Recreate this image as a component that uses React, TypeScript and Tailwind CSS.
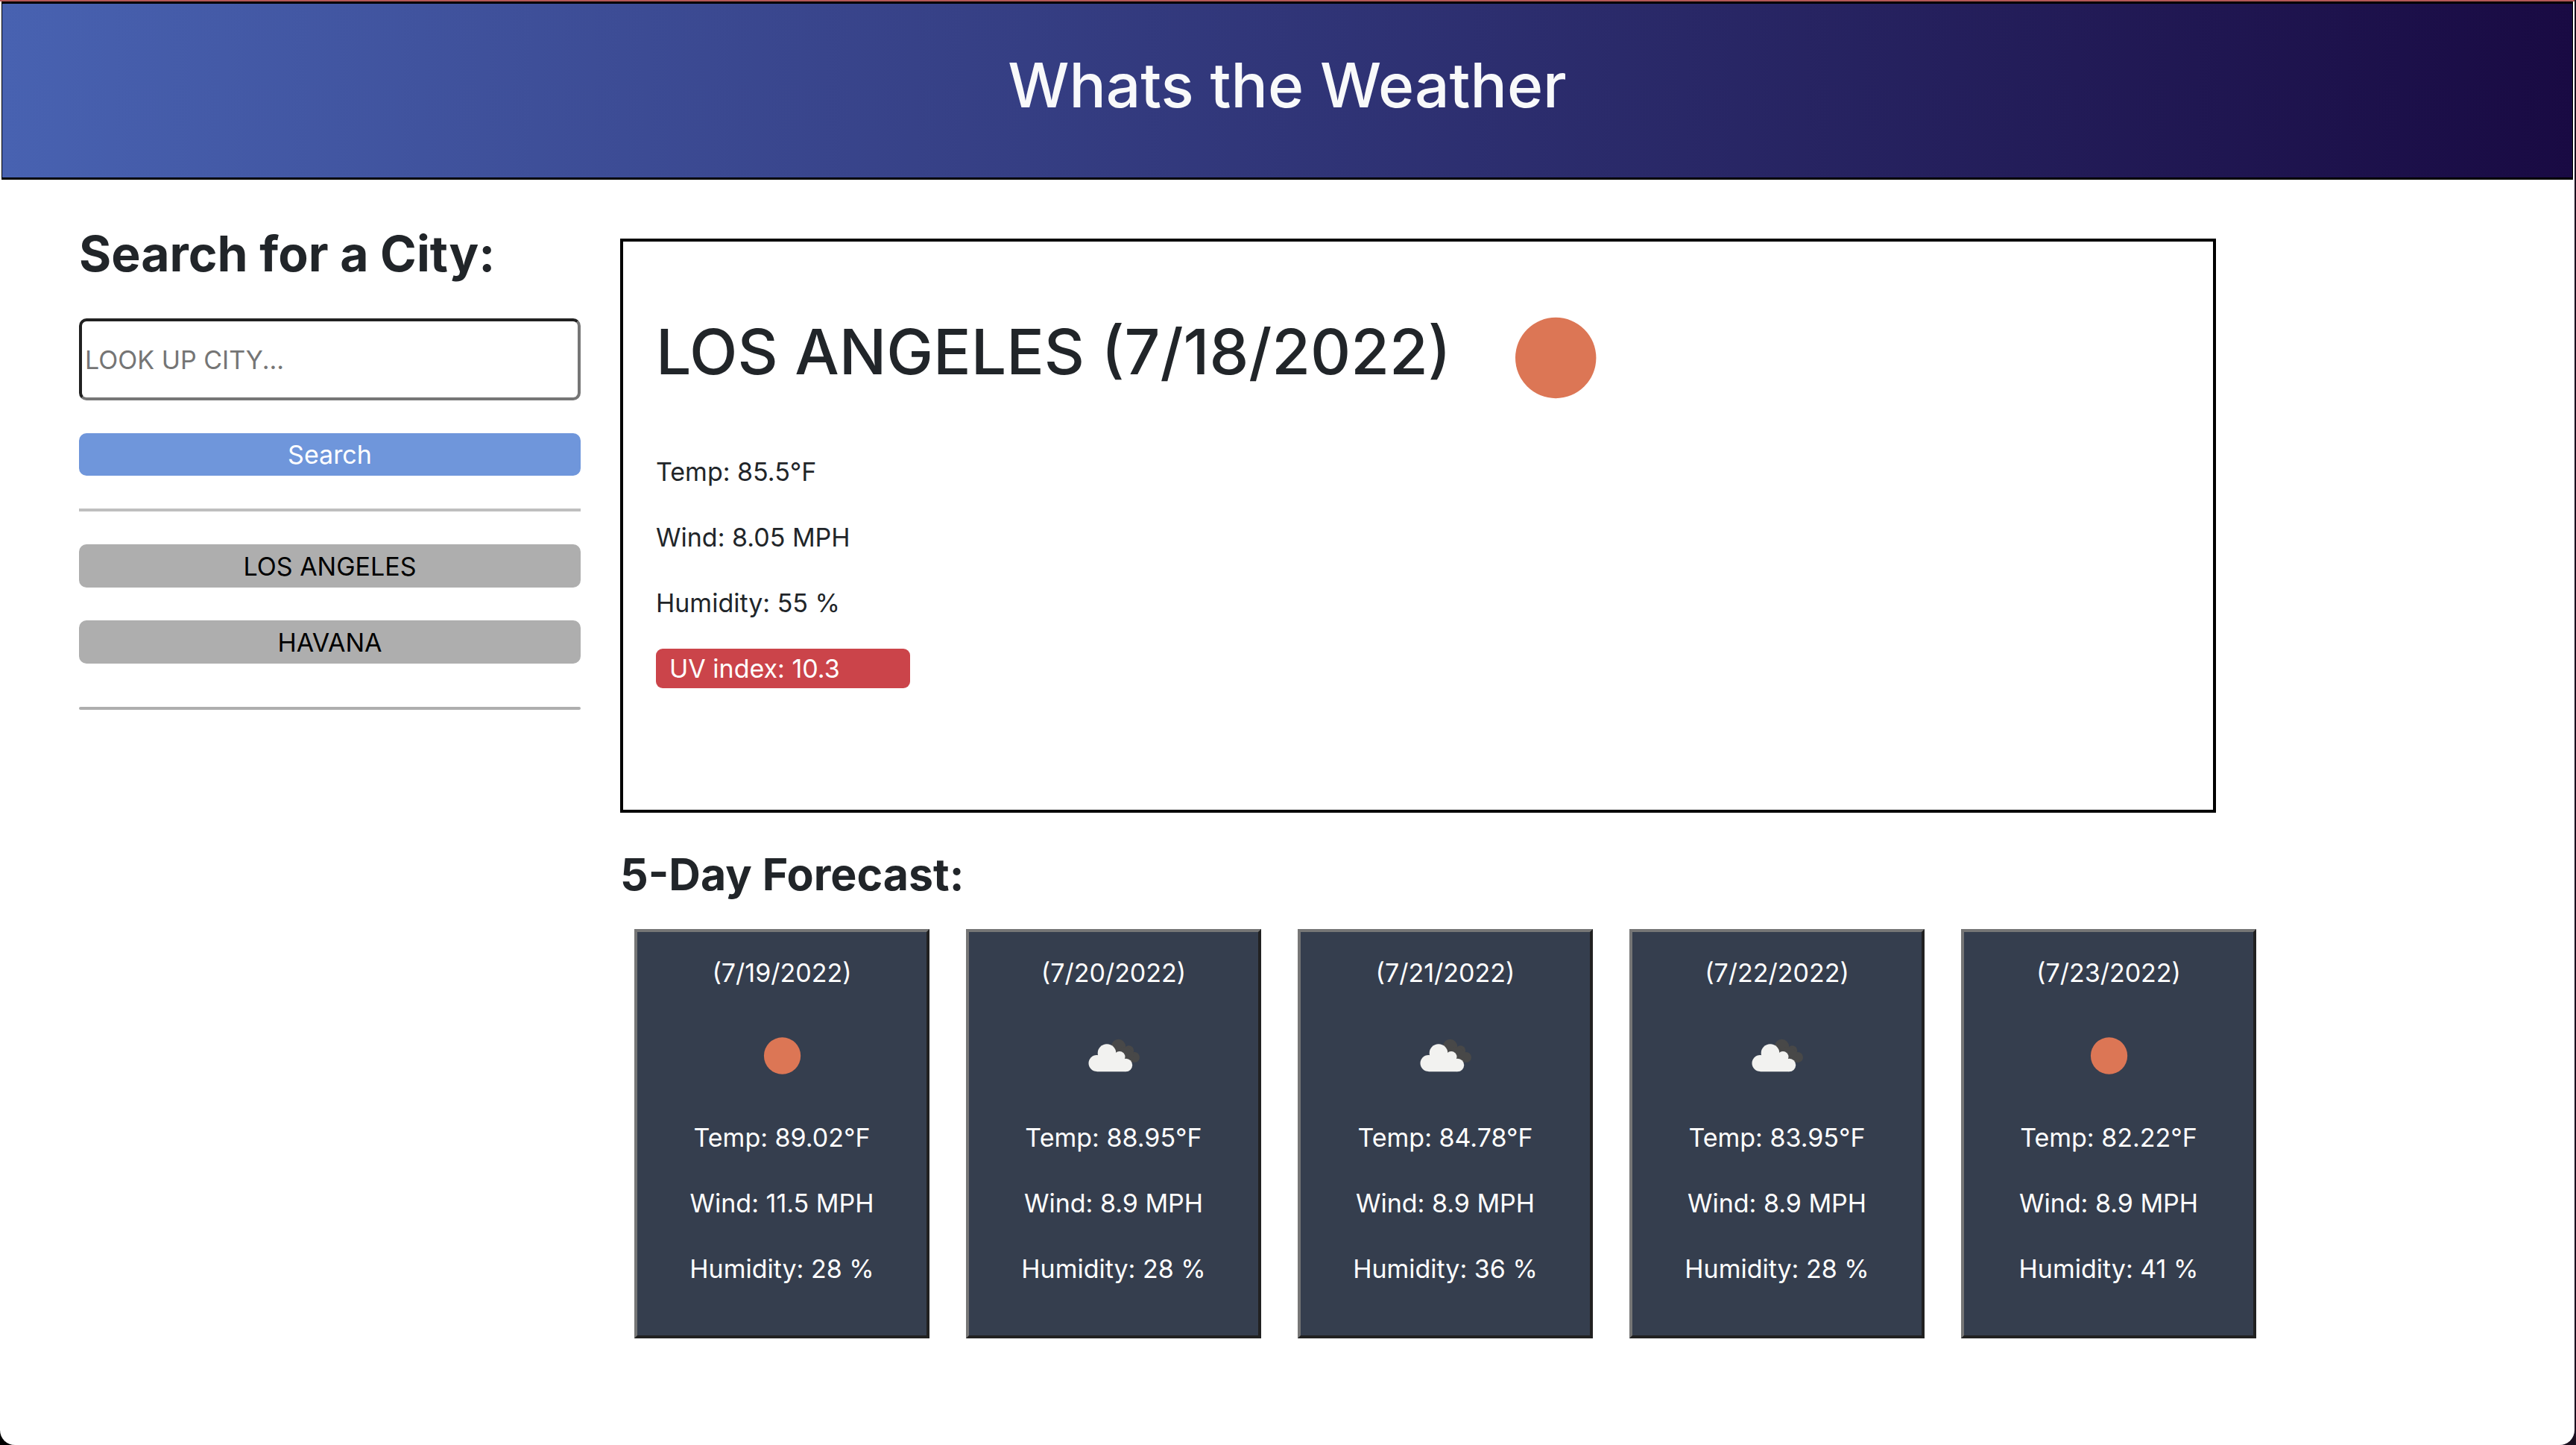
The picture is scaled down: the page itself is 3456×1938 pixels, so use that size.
import React from "react";

type Sky = "clear" | "clouds";

interface Day {
  date: string;
  sky: Sky;
  temp: string;
  wind: string;
  humidity: string;
}

const cities = ["LOS ANGELES", "HAVANA"];

const forecast: Day[] = [
  { date: "7/19/2022", sky: "clear", temp: "89.02", wind: "11.5", humidity: "28" },
  { date: "7/20/2022", sky: "clouds", temp: "88.95", wind: "8.9", humidity: "28" },
  { date: "7/21/2022", sky: "clouds", temp: "84.78", wind: "8.9", humidity: "36" },
  { date: "7/22/2022", sky: "clouds", temp: "83.95", wind: "8.9", humidity: "28" },
  { date: "7/23/2022", sky: "clear", temp: "82.22", wind: "8.9", humidity: "41" },
];

function SunIcon({ className }: { className: string }) {
  return (
    <svg viewBox="0 0 100 100" className={className} role="img" aria-label="Clear sky">
      <circle cx="50.5" cy="50" r="22.4" fill="#dc7655" />
    </svg>
  );
}

function CloudsIcon({ className }: { className: string }) {
  return (
    <svg viewBox="0 1 110 110" className={className} role="img" aria-label="Broken clouds">
      <g fill="#484848">
        <circle cx="61.5" cy="43.5" r="9.7" />
        <circle cx="75.5" cy="49" r="6.7" />
        <circle cx="83" cy="58" r="7" />
        <path d="M55 46 L75 44 L82 52 L80 65 L60 60 Z" />
      </g>
      <g fill="#f2f2f0">
        <circle cx="46" cy="52.5" r="12.3" />
        <circle cx="32.5" cy="66" r="11" />
        <circle cx="63" cy="57.5" r="7.5" />
        <circle cx="71.5" cy="68.5" r="8.7" />
        <path d="M34 56 L46 50 L63 55 L71 61 V77.2 H32.5 V60 Z" />
      </g>
    </svg>
  );
}

function ForecastCard({ day }: { day: Day }) {
  const Icon = day.sky === "clear" ? SunIcon : CloudsIcon;
  return (
    <li className="flex flex-col items-center border-4 border-t-[#767676] border-r-[#212121] border-b-[#212121] border-l-[#767676] bg-[#353e4e] pt-7 pb-[63px] text-white">
      <h3>({day.date})</h3>
      <Icon className="mt-[30px] mb-7 size-[110px]" />
      <p>Temp: {day.temp}°F</p>
      <p className="mt-[35px]">Wind: {day.wind} MPH</p>
      <p className="mt-[35px]">Humidity: {day.humidity} %</p>
    </li>
  );
}

export default function App() {
  return (
    <div className="min-h-screen bg-linear-to-r from-black to-[#1b101f] pr-0.5 font-['Inter',sans-serif] text-[34px] leading-[53px] text-[#212529]">
      <div className="min-h-screen rounded-b-[20px] bg-white">
        <header className="border-t-2 border-t-[#b45858]">
          <div className="mr-0.5 ml-0.5 border-x border-y-[3px] border-black bg-linear-to-r from-[#4862b1] to-[#190a43] pt-[58px] pb-[71px] text-center">
            <h1 className="text-[82px] leading-[104px] font-medium text-[#f8f9fa]">Whats the Weather</h1>
          </div>
        </header>

        <div className="flex gap-[53px] pt-[53px] pl-[106px]">
          <aside className="w-[673px] shrink-0">
            <form onSubmit={(e) => e.preventDefault()}>
              <h2 className="text-[66px] leading-[92px] font-bold">
                <label htmlFor="city">Search for a City:</label>
              </h2>
              <input
                id="city"
                type="text"
                placeholder="LOOK UP CITY..."
                className="mt-[41px] block h-[110px] w-full rounded-[10px] border-4 border-t-[#212121] border-r-[#767676] border-b-[#767676] border-l-[#212121] px-1 placeholder:text-[#757575]"
              />
              <button type="submit" className="mt-11 block h-[57px] w-full rounded-[10px] bg-[#6f96db] text-white">
                Search
              </button>
            </form>
            <hr className="my-11 border-t-4 border-[#bfbfbf]" />
            <ul className="flex flex-col gap-11">
              {cities.map((city) => (
                <li key={city}>
                  <button type="button" className="block h-[58px] w-full rounded-[10px] bg-[#aeaeae] text-black">
                    {city}
                  </button>
                </li>
              ))}
            </ul>
            <hr className="mt-[58px] rounded-full border-t-4 border-[#aeaeae]" />
          </aside>

          <main className="min-w-0 flex-1 pt-[26px]">
            <section className="max-w-[2141px] border-4 border-black px-11 pt-[35px] pb-[163px]">
              <div className="flex items-center gap-[18px]">
                <h2 className="pb-4 text-[84px] leading-[104px] font-medium">LOS ANGELES (7/18/2022)</h2>
                <SunIcon className="size-[242px]" />
              </div>
              <p className="mt-[5px]">Temp: 85.5°F</p>
              <p className="mt-[35px]">Wind: 8.05 MPH</p>
              <p className="mt-[35px]">Humidity: 55 %</p>
              <p className="mt-[35px] w-[341px] rounded-[9px] bg-[#cb444a] px-[18px] text-white">UV index: 10.3</p>
            </section>

            <section className="max-w-[2195px]">
              <h2 className="mt-[46px] text-[59px] leading-[74px] font-bold">5-Day Forecast:</h2>
              <ul className="mt-9 grid grid-cols-5 gap-[49px] pl-[19px]">
                {forecast.map((day) => (
                  <ForecastCard key={day.date} day={day} />
                ))}
              </ul>
            </section>
          </main>
        </div>
      </div>
    </div>
  );
}
